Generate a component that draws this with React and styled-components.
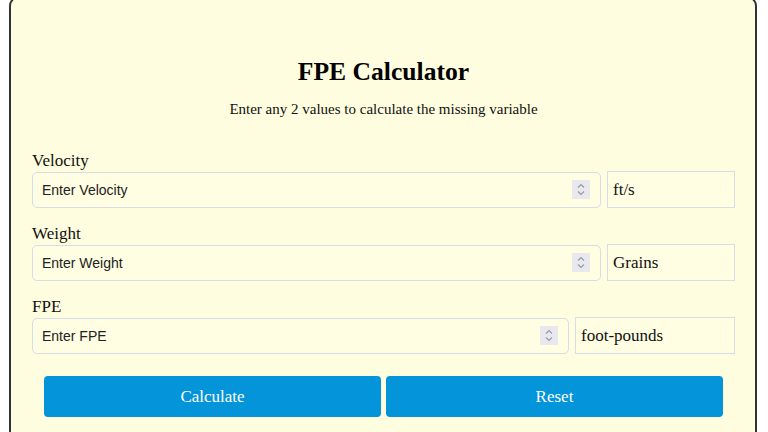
import React, { useState } from 'react';
import styled, { createGlobalStyle } from 'styled-components';

const GlobalStyle = createGlobalStyle`
  html, body {
    margin: 0;
    padding: 0;
    background: #ffffff;
    font-family: "Liberation Serif", "Times New Roman", serif;
    overflow: hidden;
  }
`;

const Page = styled.div`
  width: 768px;
  height: 432px;
  overflow: hidden;
`;

const Card = styled.div`
  margin: -4px 11px 0 9px;
  background: #fffddf;
  border: 2px solid #333;
  border-radius: 10px;
  padding: 59px 20px 20px 21px;
  box-sizing: border-box;
  min-height: 460px;
`;

const Title = styled.h1`
  margin: 0;
  text-align: center;
  font-size: 25.6px;
  font-weight: 700;
  color: #000;
  line-height: 29px;
`;

const Subtitle = styled.p`
  margin: 14px 0 0;
  text-align: center;
  font-size: 15px;
  color: #111;
  line-height: 18px;
`;

const Fields = styled.div`
  margin-top: 33px;
  display: flex;
  flex-direction: column;
  gap: 16px;
`;

const Field = styled.div`
  display: flex;
  flex-direction: column;
`;

const Label = styled.label`
  font-size: 17px;
  line-height: 20px;
  color: #111;
  margin-bottom: 0;
`;

const Row = styled.div`
  display: flex;
  gap: 6px;
  align-items: center;
`;

const InputWrap = styled.div`
  position: relative;
  flex: 1;
`;

const NumberInput = styled.input`
  width: 100%;
  box-sizing: border-box;
  height: 36px;
  padding: 0 9px;
  border: 1px solid #d6dde6;
  border-radius: 5px;
  background: #fffde2;
  font-family: "Liberation Sans", Arial, sans-serif;
  font-size: 14px;
  color: #222;
  outline: none;
  -moz-appearance: textfield;
  &::placeholder {
    color: #222;
    opacity: 1;
  }
  &::-webkit-inner-spin-button,
  &::-webkit-outer-spin-button {
    -webkit-appearance: none;
    margin: 0;
  }
`;

const Spinner = styled.div`
  position: absolute;
  right: 11px;
  top: 8px;
  width: 18px;
  height: 19px;
  background: #e8e8ee;
  display: flex;
  align-items: center;
  justify-content: center;
  pointer-events: none;
`;

const Unit = styled.div`
  width: ${(p) => p.$width}px;
  box-sizing: border-box;
  height: 37px;
  border: 1px solid #d6dde6;
  background: #fffde2;
  padding: 0 5px;
  display: flex;
  align-items: center;
  font-size: 17px;
  color: #111;
`;

const Buttons = styled.div`
  margin: 22px 12px 0;
  display: flex;
  gap: 5px;
`;

const Button = styled.button`
  flex: 1;
  height: 41px;
  border: none;
  border-radius: 4px;
  background: #0394d9;
  color: #fff;
  font-family: "Liberation Serif", "Times New Roman", serif;
  font-size: 17px;
  cursor: pointer;
`;

const SpinIcon = () => (
  <svg width="10" height="15" viewBox="0 0 10 15" fill="none" stroke="#9a9aa4" strokeWidth="1.2">
    <path d="M2 5.5 L5 2.5 L8 5.5" />
    <path d="M2 9.5 L5 12.5 L8 9.5" />
  </svg>
);

const fields = [
  { key: 'velocity', label: 'Velocity', unit: 'ft/s', unitWidth: 128 },
  { key: 'weight', label: 'Weight', unit: 'Grains', unitWidth: 128 },
  { key: 'fpe', label: 'FPE', unit: 'foot-pounds', unitWidth: 160 },
];

export default function App() {
  const [values, setValues] = useState({ velocity: '', weight: '', fpe: '' });

  const calculate = () => {
    const v = parseFloat(values.velocity);
    const w = parseFloat(values.weight);
    const e = parseFloat(values.fpe);
    if (!isNaN(v) && !isNaN(w)) {
      setValues({ ...values, fpe: ((w * v * v) / 450240).toFixed(2) });
    } else if (!isNaN(v) && !isNaN(e)) {
      setValues({ ...values, weight: ((e * 450240) / (v * v)).toFixed(2) });
    } else if (!isNaN(w) && !isNaN(e)) {
      setValues({ ...values, velocity: Math.sqrt((e * 450240) / w).toFixed(2) });
    }
  };

  return (
    <Page>
      <GlobalStyle />
      <Card>
        <Title>FPE Calculator</Title>
        <Subtitle>Enter any 2 values to calculate the missing variable</Subtitle>
        <Fields>
          {fields.map((f) => (
            <Field key={f.key}>
              <Label htmlFor={f.key}>{f.label}</Label>
              <Row>
                <InputWrap>
                  <NumberInput
                    id={f.key}
                    type="number"
                    placeholder={`Enter ${f.label}`}
                    value={values[f.key]}
                    onChange={(e) => setValues({ ...values, [f.key]: e.target.value })}
                  />
                  <Spinner>
                    <SpinIcon />
                  </Spinner>
                </InputWrap>
                <Unit $width={f.unitWidth}>{f.unit}</Unit>
              </Row>
            </Field>
          ))}
        </Fields>
        <Buttons>
          <Button onClick={calculate}>Calculate</Button>
          <Button onClick={() => setValues({ velocity: '', weight: '', fpe: '' })}>Reset</Button>
        </Buttons>
      </Card>
    </Page>
  );
}
